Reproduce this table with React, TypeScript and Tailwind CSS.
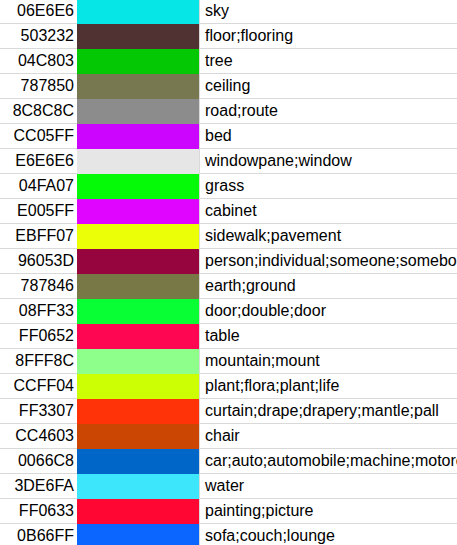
const rows: [string, string][] = [
  ["06E6E6", "sky"],
  ["503232", "floor;flooring"],
  ["04C803", "tree"],
  ["787850", "ceiling"],
  ["8C8C8C", "road;route"],
  ["CC05FF", "bed"],
  ["E6E6E6", "windowpane;window"],
  ["04FA07", "grass"],
  ["E005FF", "cabinet"],
  ["EBFF07", "sidewalk;pavement"],
  ["96053D", "person;individual;someone;somebody;mortal;soul"],
  ["787846", "earth;ground"],
  ["08FF33", "door;double;door"],
  ["FF0652", "table"],
  ["8FFF8C", "mountain;mount"],
  ["CCFF04", "plant;flora;plant;life"],
  ["FF3307", "curtain;drape;drapery;mantle;pall"],
  ["CC4603", "chair"],
  ["0066C8", "car;auto;automobile;machine;motorcar"],
  ["3DE6FA", "water"],
  ["FF0633", "painting;picture"],
  ["0B66FF", "sofa;couch;lounge"],
];

export default function App() {
  return (
    <div className="w-[457px] h-[545px] overflow-hidden bg-white text-black font-['Liberation_Sans',Arial,sans-serif] text-[16px]">
      <div className="-mt-px flex flex-col">
        {rows.map(([hex, label]) => (
          <div key={hex + label} className="flex h-[25px] shrink-0">
            <div className="w-[77px] shrink-0 border-b border-[#d9d9d9] pr-[3px] flex items-center justify-end leading-none">
              {hex}
            </div>
            <div className="w-[122px] shrink-0" style={{ backgroundColor: "#" + hex }} />
            <div className="flex-1 border-b border-l border-[#d9d9d9] pl-[5px] flex items-center whitespace-nowrap overflow-hidden leading-none">
              {label}
            </div>
          </div>
        ))}
      </div>
    </div>
  );
}
